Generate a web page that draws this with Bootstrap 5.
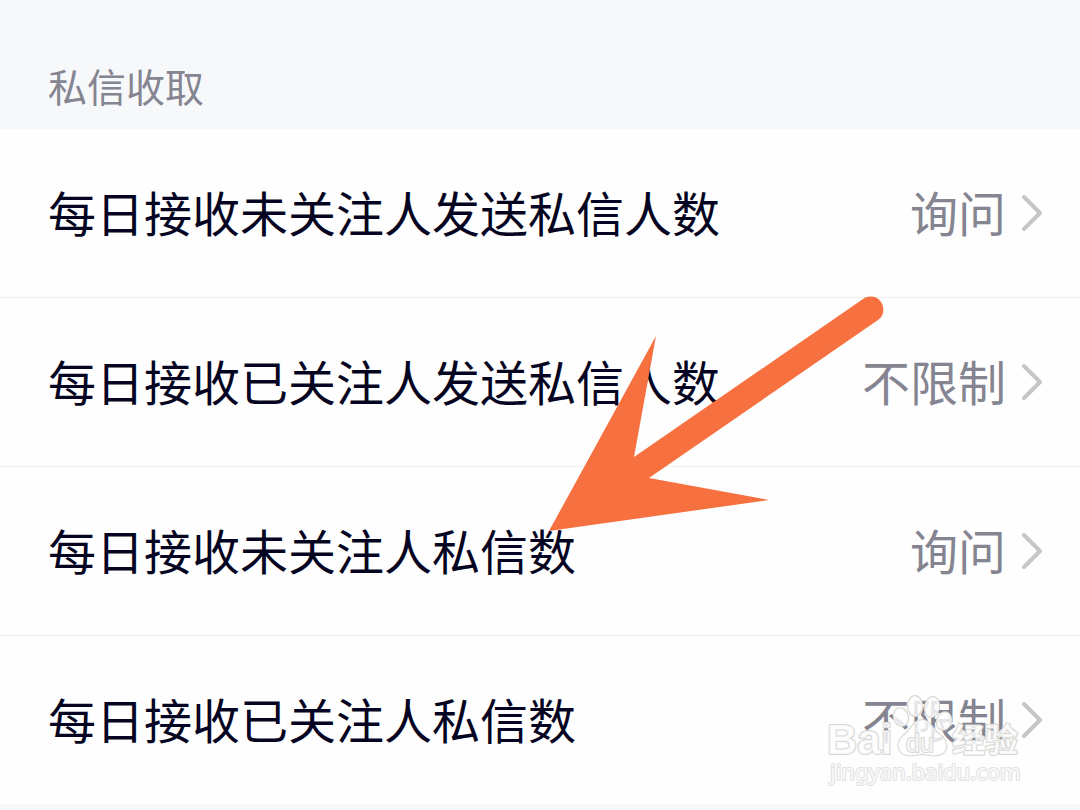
<!DOCTYPE html>
<html lang="zh-CN">
<head>
<meta charset="utf-8">
<meta name="viewport" content="width=device-width, initial-scale=1">
<title>私信收取</title>
<link href="https://cdn.jsdelivr.net/npm/bootstrap@5.3.0/dist/css/bootstrap.min.css" rel="stylesheet">
<style>
  body { background: #f7f8fa; font-family: "Noto Sans CJK SC", sans-serif; }
  .section-title { padding: 57px 48px 16px; font-size: 39px; line-height: 56px; color: #858491; font-weight: 400; }
  .settings .list-group-item { padding: 46px 36px 50px 48px; line-height: 72px; font-size: 48px; color: #050522; background: #fefefe; border-color: #eeeff0; }
  .settings .list-group-item:last-child { border-bottom: 0; }
  .setting-value { color: #858491; }
  .chevron { width: 24px; height: 44px; margin-left: 14px; }
  .pointer-arrow { position: absolute; left: 548px; top: 166px; z-index: 3; pointer-events: none; }
  .watermark { position: absolute; right: 52px; bottom: 12px; z-index: 2; pointer-events: none; }
</style>
</head>
<body>
<main>
  <h1 class="section-title mb-0">私信收取</h1>
  <div class="settings position-relative">
    <div class="list-group list-group-flush">
      <a href="#" class="list-group-item d-flex align-items-center">
        <span class="me-auto">每日接收未关注人发送私信人数</span><span class="setting-value">询问</span>
        <svg class="chevron" viewBox="0 0 24 44" fill="none" stroke="#c6c6c6" stroke-width="4" stroke-linecap="round" stroke-linejoin="round" aria-hidden="true"><path d="M4 8 20 24 4 40"/></svg>
      </a>
      <a href="#" class="list-group-item d-flex align-items-center">
        <span class="me-auto">每日接收已关注人发送私信人数</span><span class="setting-value">不限制</span>
        <svg class="chevron" viewBox="0 0 24 44" fill="none" stroke="#c6c6c6" stroke-width="4" stroke-linecap="round" stroke-linejoin="round" aria-hidden="true"><path d="M4 8 20 24 4 40"/></svg>
      </a>
      <a href="#" class="list-group-item d-flex align-items-center">
        <span class="me-auto">每日接收未关注人私信数</span><span class="setting-value">询问</span>
        <svg class="chevron" viewBox="0 0 24 44" fill="none" stroke="#c6c6c6" stroke-width="4" stroke-linecap="round" stroke-linejoin="round" aria-hidden="true"><path d="M4 8 20 24 4 40"/></svg>
      </a>
      <a href="#" class="list-group-item d-flex align-items-center">
        <span class="me-auto">每日接收已关注人私信数</span><span class="setting-value">不限制</span>
        <svg class="chevron" viewBox="0 0 24 44" fill="none" stroke="#c6c6c6" stroke-width="4" stroke-linecap="round" stroke-linejoin="round" aria-hidden="true"><path d="M4 8 20 24 4 40"/></svg>
      </a>
    </div>
    <svg class="pointer-arrow" width="338" height="238" viewBox="548 295 338 238" aria-hidden="true">
      <path fill="#f77040" d="M549 531 656 336 634 457 863 299C869 295 877 296 881 302 885 308 884 316 878 320L649 478 769 500Z"/>
    </svg>
    <svg class="watermark" width="204" height="102" viewBox="824 690 204 102" fill="#fff" fill-opacity=".8" stroke="#d6d6d3" stroke-width="2" paint-order="stroke" stroke-linejoin="round" aria-hidden="true">
      <text x="827" y="754" font-family="Liberation Sans, sans-serif" font-weight="700" font-size="42">Bai</text>
      <g>
        <ellipse cx="901" cy="717" rx="7" ry="9" transform="rotate(-18 901 717)"/>
        <ellipse cx="915" cy="706" rx="7" ry="10"/>
        <ellipse cx="932" cy="707" rx="7" ry="10" transform="rotate(12 932 707)"/>
        <ellipse cx="944" cy="721" rx="7" ry="9" transform="rotate(18 944 721)"/>
        <path d="M922 720C914 720 911 729 905 734 899 739 897 744 899 749 902 757 910 756 922 754 934 756 943 757 946 749 948 743 944 738 939 734 932 729 930 720 922 720Z"/>
      </g>
      <text x="906" y="752" font-family="Liberation Sans, sans-serif" font-weight="400" font-size="25">du</text>
      <text x="952" y="752" font-family="Noto Sans CJK SC, sans-serif" font-weight="700" font-size="33">经验</text>
      <text x="830" y="780" font-family="Noto Sans, sans-serif" font-size="22" stroke="#e2e2e0">jingyan.baidu.com</text>
    </svg>
  </div>
</main>
<script src="https://cdn.jsdelivr.net/npm/bootstrap@5.3.0/dist/js/bootstrap.bundle.min.js"></script>
</body>
</html>
